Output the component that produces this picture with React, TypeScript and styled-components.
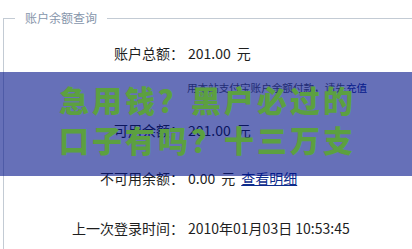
import React from 'react';
import styled, {createGlobalStyle} from 'styled-components';

const GlobalStyle = createGlobalStyle`
  html, body {
    margin: 0;
    padding: 0;
    background: #fff;
    overflow: hidden;
  }

  body {
    font-family: "Noto Sans CJK SC", "Noto Sans", sans-serif;
    color: #1e1e1e;
  }
`;

const Page = styled.div`
  position: relative;
  width: 412px;
  height: 249px;
  overflow: hidden;
  padding-top: 10px;
  box-sizing: border-box;
`;

const Box = styled.fieldset`
  margin: 0 0 0 3px;
  padding: 17px 0 0 0;
  width: 460px;
  height: 300px;
  box-sizing: border-box;
  border: 1px solid #c3cbd4;
  min-inline-size: 0;
`;

const Legend = styled.legend`
  margin-left: 11px;
  padding: 0 10px;
  font-size: 12px;
  line-height: 16px;
  color: #8796ab;
`;

const Row = styled.div<{$gap?: number}>`
  display: grid;
  grid-template-columns: 180px 1fr;
  column-gap: 4px;
  margin-top: ${p => p.$gap ?? 0}px;
  font-size: 14px;
  line-height: 20px;
  white-space: nowrap;
`;

const Label = styled.span`
  text-align: right;
`;

const Value = styled.span`
  display: flex;
  gap: 6px;
`;

const Note = styled.div`
  margin: 17px 0 0 183px;
  font-size: 10.6px;
  line-height: 16px;
  color: #555;
  white-space: nowrap;
`;

const Link = styled.a<{$underline?: boolean}>`
  color: #0d2c8c;
  text-decoration: ${p => (p.$underline ? 'underline' : 'none')};
`;

const Banner = styled.div`
  position: absolute;
  left: 0;
  top: 72px;
  width: 100%;
  height: 104px;
  background: rgba(0, 17, 137, 0.6);
  display: flex;
  flex-direction: column;
  align-items: center;
  justify-content: center;
  padding-bottom: 10px;
  box-sizing: border-box;
`;

const BannerLine = styled.div`
  font-family: "Noto Sans CJK SC", sans-serif;
  font-weight: 900;
  font-size: 30px;
  line-height: 40px;
  letter-spacing: 3px;
  padding-left: 3px;
  color: #5ca040;
  white-space: nowrap;
`;

export default function App() {
    return <>
        <GlobalStyle/>
        <Page>
            <Box>
                <Legend>账户余额查询</Legend>
                <Row>
                    <Label>账户总额：</Label>
                    <Value><span>201.00</span><span>元</span></Value>
                </Row>
                <Note>用本站支付宝账户余额付款，请先<Link href="#">充值</Link></Note>
                <Row $gap={24}>
                    <Label>可用余额：</Label>
                    <Value><span>201.00</span><span>元</span></Value>
                </Row>
                <Row $gap={28}>
                    <Label>不可用余额：</Label>
                    <Value><span>0.00</span><span>元</span><Link href="#" $underline>查看明细</Link></Value>
                </Row>
                <Row $gap={30}>
                    <Label>上一次登录时间：</Label>
                    <Value><span>2010年01月03日 10:53:45</span></Value>
                </Row>
            </Box>
            <Banner>
                <BannerLine>急用钱？黑户必过的</BannerLine>
                <BannerLine>口子有吗？十三万支</BannerLine>
            </Banner>
        </Page>
    </>;
}
